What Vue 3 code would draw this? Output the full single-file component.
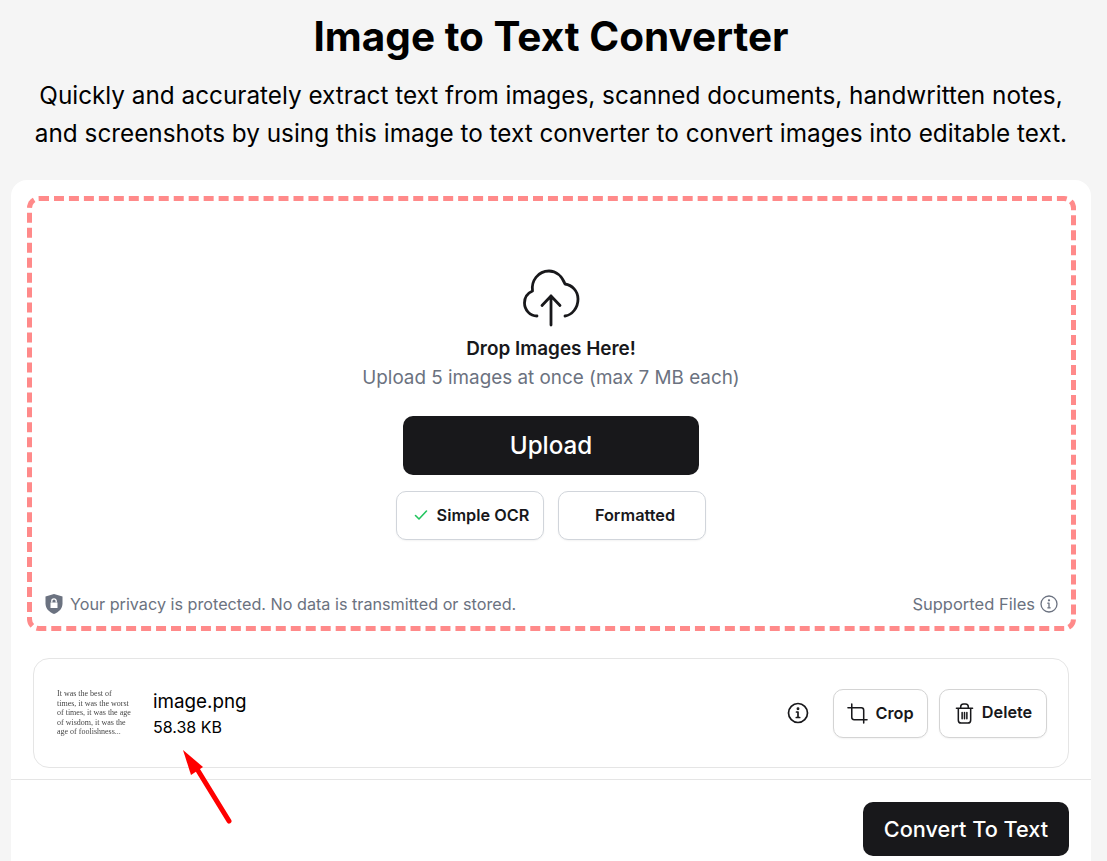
<script setup>
const lines = ['It was the best of', 'times, it was the worst', 'of times, it was the age', 'of wisdom, it was the', 'age of foolishness...']
</script>

<template>
  <main class="page">
    <header class="head">
      <h1>Image to Text Converter</h1>
      <p>Quickly and accurately extract text from images, scanned documents, handwritten notes,<br />and screenshots by using this image to text converter to convert images into editable text.</p>
    </header>

    <section class="card">
      <div class="drop-wrap">
        <div class="drop">
          <div class="center">
            <svg class="cloud" viewBox="0 0 58 58" fill="none" stroke="#18181b" stroke-width="2.800" stroke-linecap="round" stroke-linejoin="round">
              <path d="M15 47C8 47 2.500 41 2.500 34C2.500 28.500 6 24 10.500 22C9 12 16 2 27 2C34 2 40 7 43 15C50 16 56 22 56 30C56 39 50 46 43 47" />
              <path d="M29 56V27M20 36.500 29 27l9 9.500" />
            </svg>
            <div class="drop-title">Drop Images Here!</div>
            <div class="drop-sub">Upload 5 images at once (max 7 MB each)</div>
            <button class="upload">Upload</button>
            <div class="modes">
              <button class="mode mode-check">
                <svg class="check" viewBox="0 0 14 14" fill="none" stroke="#22c55e" stroke-width="1.600" stroke-linecap="round" stroke-linejoin="round"><path d="M1.500 7.500 5 11l7.500-8" /></svg>
                Simple OCR
              </button>
              <button class="mode mode-plain">Formatted</button>
            </div>
          </div>
          <div class="drop-foot">
            <span class="privacy">
              <svg class="shield" viewBox="0 0 18 20"><path fill="#6b7280" d="M9 0 17.500 2.500V9.500c0 5-3.500 8.500-8.500 10.500C4 18 .5 14.500.5 9.500V2.500Z" /><path fill="#fff" d="M5.500 8.500h7v5.500h-7z" /><path fill="none" stroke="#fff" stroke-width="1.300" d="M6.800 8.500V7a2.200 2.200 0 0 1 4.400 0v1.500" /></svg>
              Your privacy is protected. No data is transmitted or stored.
            </span>
            <span class="supported">
              Supported Files
              <svg class="info-sm" viewBox="0 0 18 18" fill="none" stroke="#6b7280" stroke-width="1.300" stroke-linecap="round"><circle cx="9" cy="9" r="8" /><path d="M9 8.200v4.600M7.800 8.200H9M7.800 12.800h2.400" /><circle cx="9" cy="5.300" r=".5" fill="#6b7280" /></svg>
            </span>
          </div>
        </div>
      </div>

      <div class="item">
        <div class="thumb"><div v-for="l in lines" :key="l">{{ l }}</div></div>
        <div class="meta">
          <div class="name">image.png</div>
          <div class="size">58.38 KB</div>
        </div>
        <div class="actions">
          <svg class="info" viewBox="0 0 22 22" fill="none" stroke="#18181b" stroke-width="1.700" stroke-linecap="round"><circle cx="11" cy="11" r="9.500" /><path d="M11 10v5.500M9.500 10H11M9.300 15.500h3.400" /><circle cx="11" cy="6.700" r=".6" fill="#18181b" /></svg>
          <button class="act act-crop">
            <svg class="ico" viewBox="0 0 22 22" fill="none" stroke="#18181b" stroke-width="1.600" stroke-linecap="round" stroke-linejoin="round"><path d="M5 1v14a2.500 2.500 0 0 0 2.500 2.500H21" /><path d="M1 5h14a2.500 2.500 0 0 1 2.500 2.500V21" /></svg>
            Crop
          </button>
          <button class="act act-del">
            <svg class="ico ico-del" viewBox="0 0 20 22" fill="none" stroke="#18181b" stroke-width="1.600" stroke-linecap="round" stroke-linejoin="round"><path d="M1.500 5.500h17M3.500 5.500V18a3 3 0 0 0 3 3h7a3 3 0 0 0 3-3V5.500M6 5.500V4a3 3 0 0 1 3-3h2a3 3 0 0 1 3 3v1.500M7.500 10v6.500M10 10v6.500M12.500 10v6.500" /></svg>
            <span class="del-label">Delete</span>
          </button>
        </div>
      </div>

      <div class="foot">
        <button class="convert">Convert To Text</button>
      </div>
    </section>

    <svg class="arrow" viewBox="0 0 60 90" fill="none">
      <path d="M49 71 14 14" stroke="#ff0000" stroke-width="5" stroke-linecap="round" />
      <path d="M3 0 23 17 11 25Z" fill="#ff0000" />
    </svg>
  </main>
</template>

<style>
html, body { margin: 0; height: 861px; overflow: hidden; background: #f5f5f5; }
</style>

<style scoped>
.page {
  position: relative;
  box-sizing: border-box;
  width: 1103px;
  padding: 0 12px 0 11px;
  font-family: Inter, "Liberation Sans", sans-serif;
  color: #000;
}
.head { text-align: center; height: 180px; }
h1 {
  margin: 0;
  padding-top: 13px;
  font-size: 40.500px;
  line-height: 48px;
  font-weight: 700;
}
.head p {
  margin: 15px -12px 0;
  font-size: 24.300px;
  line-height: 38px;
  white-space: nowrap;
}
.card {
  background: #fff;
  border-radius: 16px 16px 0 0;
  padding-bottom: 6px;
}
.drop-wrap { padding: 16px 15px 0 16px; }
.drop {
  box-sizing: border-box;
  height: 435px;
  border: 5px dashed #ff8a8a;
  border-radius: 12px;
  display: flex;
  flex-direction: column;
  padding: 0 13px;
}
.center {
  flex: 1;
  display: flex;
  flex-direction: column;
  align-items: center;
  padding-top: 68px;
  padding-right: 1px;
}
.cloud { width: 58px; height: 58px; display: block; }
.drop-title {
  margin-top: 8px;
  font-size: 18.900px;
  line-height: 28px;
  font-weight: 600;
  color: #18181b;
}
.drop-sub {
  font-size: 18.850px;
  line-height: 30px;
  color: #6b7280;
}
button { font-family: inherit; cursor: pointer; }
.upload {
  margin-top: 23px;
  width: 296px;
  height: 59px;
  border: 0;
  border-radius: 10px;
  background: #18181b;
  color: #fff;
  font-size: 24.200px;
  font-weight: 500;
}
.modes { display: flex; gap: 14px; margin-top: 16px; }
.mode {
  box-sizing: border-box;
  width: 148px;
  height: 49px;
  display: flex;
  align-items: center;
  justify-content: center;
  gap: 9px;
  padding-bottom: 2px;
  background: #fff;
  border: 1px solid #d1d5db;
  border-radius: 10px;
  font-size: 16.300px;
  font-weight: 600;
  color: #18181b;
  box-shadow: 0 1px 2px rgba(0, 0, 0, .05);
}
.mode-check { padding-left: 9px; }
.mode-plain { padding-left: 12px; }
.check { width: 14px; height: 14px; }
.drop-foot {
  display: flex;
  justify-content: space-between;
  align-items: center;
  height: 26px;
  margin-bottom: 9px;
  font-size: 16.200px;
  color: #6b7280;
}
.privacy, .supported { display: flex; align-items: center; }
.privacy { gap: 7px; }
.supported { gap: 5px; font-size: 16.500px; }
.shield { width: 18px; height: 20px; }
.info-sm { width: 18px; height: 18px; }
.item {
  box-sizing: border-box;
  margin: 27px 22px 0 22px;
  height: 110px;
  border: 1px solid #e5e5e5;
  border-radius: 16px;
  display: flex;
  align-items: center;
  padding: 0 21px 0 23px;
}
.thumb {
  width: 96px;
  font-family: "Liberation Serif", serif;
  font-size: 8px;
  line-height: 9.500px;
  color: #222;
  opacity: .85;
  will-change: transform;
  white-space: nowrap;
}
.name { font-size: 18.800px; line-height: 28px; padding-top: 1px; }
.size { font-size: 16px; line-height: 24px; margin-top: -1px; }
.actions { margin-left: auto; display: flex; align-items: center; }
.info { width: 22px; height: 22px; margin-right: 24px; }
.act {
  box-sizing: border-box;
  height: 49px;
  display: flex;
  align-items: center;
  justify-content: center;
  gap: 7px;
  background: #fff;
  border: 1px solid #d4d4d4;
  border-radius: 10px;
  font-size: 16.300px;
  font-weight: 600;
  color: #18181b;
  box-shadow: 0 1px 2px rgba(0, 0, 0, .05);
}
.act-crop { width: 95px; margin-right: 11px; }
.act-del { width: 108px; gap: 8px; padding-left: 7px; }
.ico { width: 21px; height: 21px; }
.ico-del { width: 19px; }
.del-label { margin-bottom: 2px; }
.foot {
  margin-top: 11px;
  border-top: 1px solid #e5e5e5;
  padding: 22px 22px 20px;
  display: flex;
  justify-content: flex-end;
}
.convert {
  width: 206px;
  height: 54px;
  border: 0;
  border-radius: 10px;
  background: #18181b;
  color: #fff;
  font-size: 21.700px;
  font-weight: 500;
}
.arrow {
  position: absolute;
  left: 180px;
  top: 750px;
  width: 60px;
  height: 90px;
}
</style>
